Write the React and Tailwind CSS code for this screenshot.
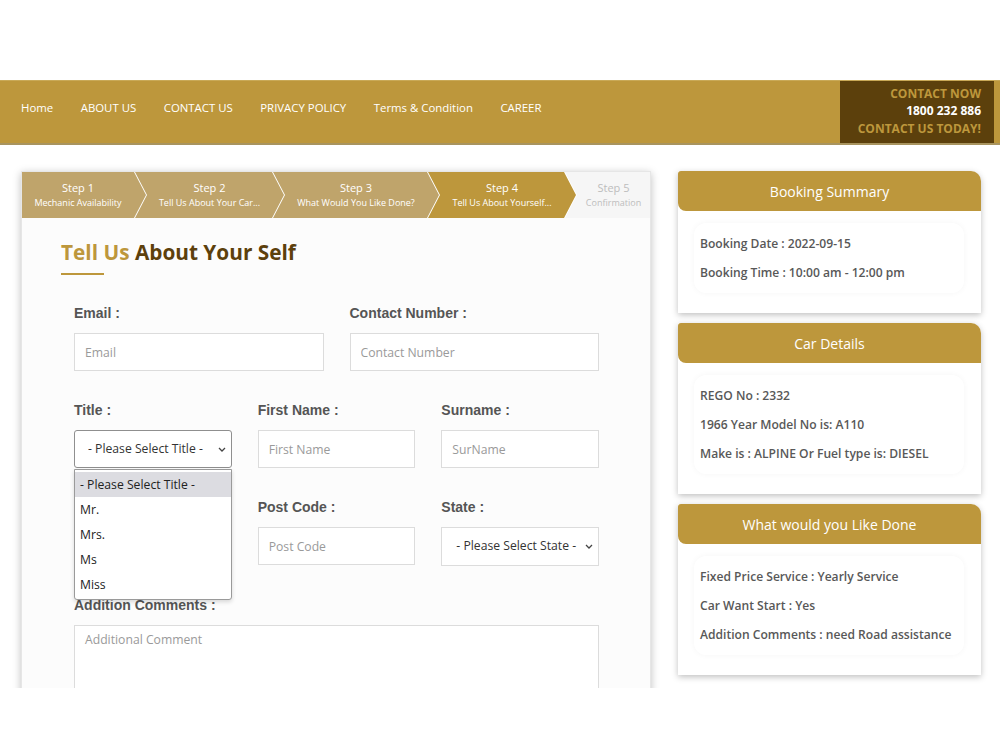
const STEPS = [
  { n: 'Step 1', sub: 'Mechanic Availability', w: 'w-[124px]', bg: 'bg-[#bfa46b]', first: true },
  { n: 'Step 2', sub: 'Tell Us About Your Car...', w: 'w-[149px]', bg: 'bg-[#bfa46b]' },
  { n: 'Step 3', sub: 'What Would You Like Done?', w: 'w-[166px]', bg: 'bg-[#bfa46b]' },
  { n: 'Step 4', sub: 'Tell Us About Yourself...', w: 'w-[148px]', bg: 'bg-[#bd973c]' },
]

const TITLES = ['- Please Select Title -', 'Mr.', 'Mrs.', 'Ms', 'Miss']

function Chevron() {
  return (
    <svg width="8" height="5" viewBox="0 0 8 5" className="text-[#444]">
      <path d="M1 1l3 3 3-3" fill="none" stroke="currentColor" strokeWidth="1.3" />
    </svg>
  )
}

function Label({ children }) {
  return (
    <label className="block h-[20px] leading-[20px] mb-[10px] text-[14px] font-bold text-[#555] font-['Liberation_Sans',Arial,sans-serif]">
      {children}
    </label>
  )
}

function Input({ placeholder }) {
  return (
    <input
      placeholder={placeholder}
      className="block w-full h-[38px] border border-[#dcdcdc] bg-white px-[10px] text-[12.2px] text-[#333] placeholder:text-[#9a9a9a] outline-none"
    />
  )
}

function SummaryCard({ title, lines }) {
  return (
    <div className="bg-white shadow-[0_2px_6px_rgba(0,0,0,0.25)] rounded-tr-[10px]">
      <div className="h-[40px] bg-[#bd973c] rounded-tr-[10px] rounded-tl-[3px] rounded-bl-[8px] flex items-center justify-center text-white text-[14px]">
        {title}
      </div>
      <div className="pt-[12px] pb-[20px] pl-[16px] pr-[17px]">
        <div className="rounded-xl bg-white shadow-[0_0_6px_rgba(0,0,0,0.04)] px-[6px] py-[6px]">
          {lines.map(l => (
            <p key={l} className="leading-[29px] text-[12.1px] font-semibold text-[#585858] whitespace-nowrap">{l}</p>
          ))}
        </div>
      </div>
    </div>
  )
}

export default function App() {
  return (
    <div className="w-full min-h-[750px] bg-white font-['Open_Sans',sans-serif] pt-[80px]">
      {/* Header */}
      <header className="h-[65px] bg-[#bd973c] border-t border-[#c9a957] border-b-2 border-b-[#a8945f] flex items-center pr-[6px]">
        <nav className="flex-1 flex items-center gap-[27.5px] pl-[21px] pb-[8px] text-[11.4px] text-white">
          <a>Home</a>
          <a>ABOUT US</a>
          <a>CONTACT US</a>
          <a>PRIVACY POLICY</a>
          <a>Terms &amp; Condition</a>
          <a>CAREER</a>
        </nav>
        <div className="w-[154px] h-full bg-[#5c400c] flex flex-col justify-center items-end pr-[13px] pb-[2px] text-[12px] font-bold leading-[17.5px]">
          <span className="text-[#bd973c]">CONTACT NOW</span>
          <span className="text-white">1800 232 886</span>
          <span className="text-[#bd973c]">CONTACT US TODAY!</span>
        </div>
      </header>

      <main className="h-[543px] overflow-hidden flex items-start gap-[27px] pt-[26px] pl-[21px]">
        {/* Form card */}
        <section className="w-[630px] min-h-[700px] bg-[#fcfcfc] border border-[#e6e6e6] shadow-[0_2px_8px_rgba(0,0,0,0.25)]">
          <div className="flex h-[46px] bg-white">
            {STEPS.map(s => (
              <div
                key={s.n}
                className={`${s.w} ${s.bg} ${s.first ? 'pl-0 [clip-path:polygon(0_0,calc(100%-12px)_0,100%_50%,calc(100%-12px)_100%,0_100%)]' : 'ml-[-11px] pl-[12px] [clip-path:polygon(0_0,calc(100%-12px)_0,100%_50%,calc(100%-12px)_100%,0_100%,12px_50%)]'} shrink-0 pr-[12px] flex flex-col items-center justify-center text-white`}
              >
                <span className="text-[11px] leading-[16px]">{s.n}</span>
                <span className="text-[9px] leading-[14px] whitespace-nowrap">{s.sub}</span>
              </div>
            ))}
            <div className="flex-1 ml-[-11px] pl-[12px] bg-[#f6f6f6] [clip-path:polygon(0_0,100%_0,100%_100%,0_100%,12px_50%)] flex flex-col items-center justify-center text-[#bdbdbd]">
              <span className="text-[11px] leading-[16px]">Step 5</span>
              <span className="text-[9px] leading-[14px]">Confirmation</span>
            </div>
          </div>

          <div className="pl-[39px] pt-[20px]">
            <h2 className="text-[20.8px] font-bold leading-[28px]">
              <span className="text-[#bd973c]">Tell Us</span> <span className="text-[#5c400c]">About Your Self</span>
            </h2>
            <div className="w-[43px] h-[2px] bg-[#bd973c] mt-[7px]" />
          </div>

          <form className="pl-[52px] w-[577px] pt-[28px] flex flex-col gap-[29px]">
            <div className="grid grid-cols-2 gap-x-[26px]">
              <div>
                <Label>Email :</Label>
                <Input placeholder="Email" />
              </div>
              <div>
                <Label>Contact Number :</Label>
                <Input placeholder="Contact Number" />
              </div>
            </div>

            <div className="grid grid-cols-3 gap-x-[26px]">
              <div className="relative">
                <Label>Title :</Label>
                <div className="relative">
                  <select className="block w-full h-[38px] appearance-none border border-[#8f8f8f] rounded-[3px] bg-white pl-[13px] text-[12.2px] text-[#333] outline-none">
                    {TITLES.map(t => <option key={t}>{t}</option>)}
                  </select>
                  <span className="absolute right-[6px] top-[17px] pointer-events-none"><Chevron /></span>
                </div>
                <ul className="absolute z-10 left-0 right-0 top-[69px] bg-white border border-[#9a9a9a] rounded-b-[3px] shadow-[0_2px_4px_rgba(0,0,0,0.15)] py-[2px] text-[12.2px] text-[#222]">
                  {TITLES.map((t, i) => (
                    <li key={t} className={`h-[25px] leading-[25px] pl-[5px] ${i === 0 ? 'bg-[#dcdce1]' : ''}`}>{t}</li>
                  ))}
                </ul>
              </div>
              <div>
                <Label>First Name :</Label>
                <Input placeholder="First Name" />
              </div>
              <div>
                <Label>Surname :</Label>
                <Input placeholder="SurName" />
              </div>
            </div>

            <div className="grid grid-cols-3 gap-x-[26px]">
              <div />
              <div>
                <Label>Post Code :</Label>
                <Input placeholder="Post Code" />
              </div>
              <div>
                <Label>State :</Label>
                <div className="relative">
                  <select className="block w-full h-[39px] appearance-none border border-[#dcdcdc] bg-white pl-[14px] text-[12.2px] text-[#333] outline-none">
                    <option>- Please Select State -</option>
                  </select>
                  <span className="absolute right-[6px] top-[17px] pointer-events-none"><Chevron /></span>
                </div>
              </div>
            </div>

            <div>
              <Label>Addition Comments :</Label>
              <textarea
                placeholder="Additional Comment"
                className="block w-full h-[120px] border border-[#dcdcdc] bg-white px-[10px] py-[5px] text-[12.2px] placeholder:text-[#9a9a9a] outline-none resize-none"
              />
            </div>
          </form>
        </section>

        {/* Summary column */}
        <aside className="w-[303px] flex flex-col gap-[10px]">
          <SummaryCard
            title="Booking Summary"
            lines={['Booking Date : 2022-09-15', 'Booking Time : 10:00 am - 12:00 pm']}
          />
          <SummaryCard
            title="Car Details"
            lines={['REGO No : 2332', '1966 Year Model No is: A110', 'Make is : ALPINE Or Fuel type is: DIESEL']}
          />
          <SummaryCard
            title="What would you Like Done"
            lines={['Fixed Price Service : Yearly Service', 'Car Want Start : Yes', 'Addition Comments : need Road assistance']}
          />
        </aside>
      </main>
    </div>
  )
}
